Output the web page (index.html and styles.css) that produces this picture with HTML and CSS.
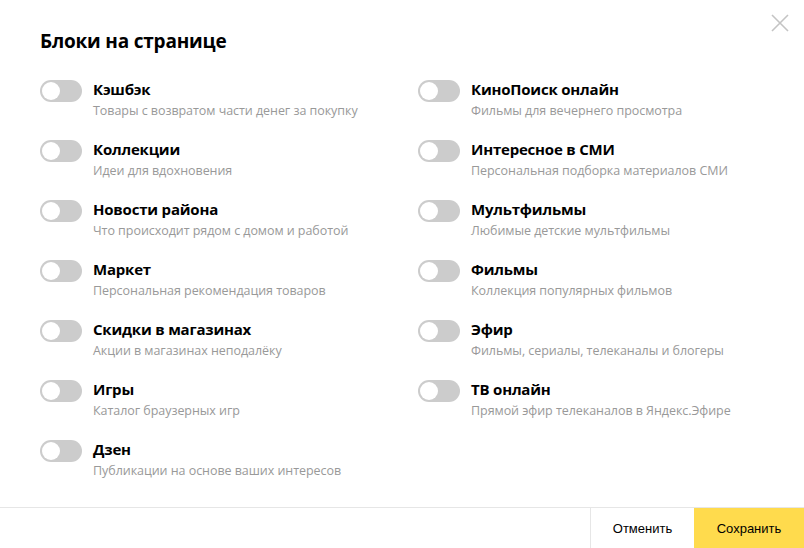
FILE: index.html
```html
<!DOCTYPE html>
<html lang="ru">
<head>
  <meta charset="UTF-8">
  <title>Блоки на странице</title>
  <link rel="stylesheet" href="styles.css">
</head>
<body>

<div class="modal">

  <!-- Close button -->
  <button class="close" aria-label="Закрыть">
    <svg width="18" height="18" viewBox="0 0 18 18">
      <path d="M1 1L17 17M17 1L1 17" stroke="#c4c4c4" stroke-width="1.6" fill="none"/>
    </svg>
  </button>

  <div class="content">
    <h1>Блоки на странице</h1>

    <div class="blocks">
      <!-- Left column -->
      <div class="column">
        <div class="block">
          <span class="toggle"></span>
          <div class="block-text">
            <div class="block-title">Кэшбэк</div>
            <div class="block-desc">Товары с возвратом части денег за покупку</div>
          </div>
        </div>
        <div class="block">
          <span class="toggle"></span>
          <div class="block-text">
            <div class="block-title">Коллекции</div>
            <div class="block-desc">Идеи для вдохновения</div>
          </div>
        </div>
        <div class="block">
          <span class="toggle"></span>
          <div class="block-text">
            <div class="block-title">Новости района</div>
            <div class="block-desc">Что происходит рядом с домом и работой</div>
          </div>
        </div>
        <div class="block">
          <span class="toggle"></span>
          <div class="block-text">
            <div class="block-title">Маркет</div>
            <div class="block-desc">Персональная рекомендация товаров</div>
          </div>
        </div>
        <div class="block">
          <span class="toggle"></span>
          <div class="block-text">
            <div class="block-title">Скидки в магазинах</div>
            <div class="block-desc">Акции в магазинах неподалёку</div>
          </div>
        </div>
        <div class="block">
          <span class="toggle"></span>
          <div class="block-text">
            <div class="block-title">Игры</div>
            <div class="block-desc">Каталог браузерных игр</div>
          </div>
        </div>
        <div class="block">
          <span class="toggle"></span>
          <div class="block-text">
            <div class="block-title">Дзен</div>
            <div class="block-desc">Публикации на основе ваших интересов</div>
          </div>
        </div>
      </div>

      <!-- Right column -->
      <div class="column">
        <div class="block">
          <span class="toggle"></span>
          <div class="block-text">
            <div class="block-title">КиноПоиск онлайн</div>
            <div class="block-desc">Фильмы для вечернего просмотра</div>
          </div>
        </div>
        <div class="block">
          <span class="toggle"></span>
          <div class="block-text">
            <div class="block-title">Интересное в СМИ</div>
            <div class="block-desc">Персональная подборка материалов СМИ</div>
          </div>
        </div>
        <div class="block">
          <span class="toggle"></span>
          <div class="block-text">
            <div class="block-title">Мультфильмы</div>
            <div class="block-desc">Любимые детские мультфильмы</div>
          </div>
        </div>
        <div class="block">
          <span class="toggle"></span>
          <div class="block-text">
            <div class="block-title">Фильмы</div>
            <div class="block-desc">Коллекция популярных фильмов</div>
          </div>
        </div>
        <div class="block">
          <span class="toggle"></span>
          <div class="block-text">
            <div class="block-title">Эфир</div>
            <div class="block-desc">Фильмы, сериалы, телеканалы и блогеры</div>
          </div>
        </div>
        <div class="block">
          <span class="toggle"></span>
          <div class="block-text">
            <div class="block-title">ТВ онлайн</div>
            <div class="block-desc">Прямой эфир телеканалов в Яндекс.Эфире</div>
          </div>
        </div>
      </div>
    </div>
  </div>

  <!-- Footer buttons -->
  <div class="footer">
    <button class="btn btn-cancel">Отменить</button>
    <button class="btn btn-save">Сохранить</button>
  </div>

</div>

</body>
</html>
```

FILE: styles.css
```css
body {
  margin: 0;
  background: #fff;
  font-family: "Open Sans", Arial, sans-serif;
  color: #000;
}

.modal {
  position: relative;
  width: 804px;
  height: 548px;
  display: flex;
  flex-direction: column;
  box-sizing: border-box;
}

.close {
  position: absolute;
  top: 14px;
  right: 15px;
  width: 18px;
  height: 18px;
  padding: 0;
  border: 0;
  background: none;
  cursor: pointer;
}

.close svg {
  display: block;
}

.content {
  flex: 1;
  padding: 28px 0 0 40px;
}

h1 {
  margin: 0 0 24px 0;
  font-size: 19px;
  line-height: 27px;
  font-weight: 700;
  letter-spacing: -0.2px;
}

/* Two columns of toggles */
.blocks {
  display: flex;
}

.column {
  width: 378px;
  display: flex;
  flex-direction: column;
  gap: 20px;
}

.block {
  display: flex;
  align-items: flex-start;
  gap: 11px;
  height: 40px;
}

.toggle {
  position: relative;
  flex: none;
  width: 42px;
  height: 22px;
  margin-top: 1px;
  border-radius: 11px;
  background: #cccccc;
}

.toggle::after {
  content: "";
  position: absolute;
  top: 2px;
  left: 2px;
  width: 18px;
  height: 18px;
  border-radius: 50%;
  background: #fff;
}

.block-title {
  font-size: 15px;
  line-height: 20px;
  font-weight: 700;
  letter-spacing: -0.2px;
}

.block-desc {
  margin-top: 3px;
  font-size: 12.5px;
  line-height: 17px;
  color: #999;
  letter-spacing: -0.05px;
}

/* Footer */
.footer {
  display: flex;
  justify-content: flex-end;
  height: 40px;
  border-top: 1px solid #e6e6e6;
}

.btn {
  height: 40px;
  padding: 0;
  border: 0;
  font-family: "Liberation Sans", Arial, sans-serif;
  font-size: 13px;
  color: #000;
  cursor: pointer;
}

.btn-cancel {
  width: 104px;
  background: #fff;
  border-left: 1px solid #e6e6e6;
}

.btn-save {
  width: 110px;
  background: #ffdb4d;
}
```
